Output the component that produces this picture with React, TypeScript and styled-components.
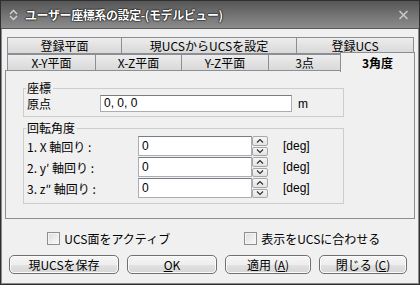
import styled, { createGlobalStyle } from 'styled-components';

const GlobalStyle = createGlobalStyle`
  html, body {
    margin: 0;
    padding: 0;
    background: #f0f0f0;
  }
  body {
    font-family: "Noto Sans CJK JP", "Noto Sans", sans-serif;
    font-size: 12px;
    color: #000;
  }
  * {
    box-sizing: border-box;
  }
`;

const Window = styled.div`
    width: 420px;
    height: 285px;
    border: 1px solid #2f2f2f;
    display: flex;
    flex-direction: column;
    background: #f0f0f0;
`;

const TitleBar = styled.div`
    height: 28px;
    flex: none;
    display: flex;
    align-items: center;
    padding: 0 10px 0 8px;
    background: linear-gradient(#565656, #727272 50%, #8c8c8c);
    border-bottom: 1px solid #5a5a5a;
`;

const TitleText = styled.span`
    margin-left: 7px;
    flex: 1;
    color: #fff;
    font-weight: bold;
    font-size: 12px;
    letter-spacing: -0.4px;
    text-shadow: 0 0 2px #000, 0 0 1px #000, 0 0 1px #000;
`;

const Body = styled.div`
    flex: 1;
    border-left: 1px solid #8a8a8a;
    border-right: 1px solid #8a8a8a;
    border-bottom: 1px solid #8a8a8a;
    padding: 8px 4px 0 5px;
`;

const TabRow = styled.div`
    display: flex;
    height: 17px;
    align-items: flex-start;
`;

const Tab = styled.div<{ $w: number; $active?: boolean }>`
    width: ${(p) => p.$w}px;
    height: ${(p) => (p.$active ? 20 : 17)}px;
    margin-top: ${(p) => (p.$active ? -2 : 0)}px;
    margin-right: -1px;
    border: 1px solid #8c8e94;
    border-bottom: ${(p) => (p.$active ? 'none' : '1px solid #8c8e94')};
    background: ${(p) => (p.$active ? '#f0f0f0' : 'linear-gradient(#ededed, #e2e2e2 50%, #d9d9d9)')};
    font-weight: ${(p) => (p.$active ? 'bold' : 'normal')};
    text-align: center;
    line-height: ${(p) => (p.$active ? 19 : 15)}px;
    position: ${(p) => (p.$active ? 'relative' : 'static')};
    z-index: ${(p) => (p.$active ? 2 : 0)};
    white-space: nowrap;
`;

const Panel = styled.div`
    margin-left: -2px;
    margin-top: -1px;
    width: 410px;
    height: 149px;
    border: 1px solid #8c8e94;
    padding: 10px 0 0 17px;
`;

const Group = styled.fieldset<{ $pt: number; $pb: number; $mt: number }>`
    margin: ${(p) => p.$mt}px 0 0 0;
    width: 321px;
    padding: ${(p) => p.$pt}px 0 ${(p) => p.$pb}px 2px;
    border: 1px solid #cdcdcd;
    min-inline-size: auto;
`;

const Legend = styled.legend`
    padding: 0 2px 0 1px;
    line-height: 14px;
    font-size: 12px;
`;

const Row = styled.div<{ $label: number }>`
    display: grid;
    grid-template-columns: ${(p) => p.$label}px auto auto auto;
    align-items: center;
    justify-content: start;
`;

const RowList = styled.div`
    display: flex;
    flex-direction: column;
    gap: 1px;
`;

const Label = styled.span`
    padding-left: 1px;
    white-space: nowrap;
`;

const Input = styled.div<{ $w: number; $h: number }>`
    width: ${(p) => p.$w}px;
    height: ${(p) => p.$h}px;
    background: #fff;
    border: 1px solid #abadb3;
    border-top-color: #7a7c84;
    padding-left: 3px;
    line-height: ${(p) => p.$h - 2}px;
    font-family: "Liberation Sans", "Noto Sans CJK JP", sans-serif;
`;

const Unit = styled.span<{ $ml: number }>`
    margin-left: ${(p) => p.$ml}px;
    font-family: "Liberation Sans", "Noto Sans CJK JP", sans-serif;
`;

const Spin = styled.div`
    width: 16px;
    height: 20px;
    display: flex;
    flex-direction: column;
    gap: 1px;
`;

const SpinBtn = styled.div`
    flex: 1;
    border: 1px solid #a7a7a7;
    border-radius: 2px;
    background: linear-gradient(#f6f6f6, #e3e3e3);
    display: flex;
    align-items: center;
    justify-content: center;
`;

const CheckRow = styled.div`
    margin-top: 11px;
    height: 16px;
    display: grid;
    grid-template-columns: 1fr 1fr;
    justify-items: center;
    align-items: center;
`;

const Check = styled.label`
    display: flex;
    align-items: center;
    gap: 4px;
    white-space: nowrap;
`;

const Box = styled.span`
    width: 13px;
    height: 13px;
    border: 1px solid #8f8f8f;
    background: linear-gradient(135deg, #dcdcdc, #fbfbfb);
    box-shadow: inset 0 0 0 1px #f4f4f4;
`;

const ButtonRow = styled.div`
    margin-top: 9px;
    display: flex;
    gap: 8px;
    padding-left: 2px;
`;

const Button = styled.div<{ $w: number }>`
    width: ${(p) => p.$w}px;
    height: 19px;
    border: 1px solid #707070;
    border-radius: 5px;
    background: linear-gradient(#f6f6f6, #eeeeee 50%, #e2e2e2 51%, #d6d6d6);
    box-shadow: inset 0 0 0 1px #fbfbfb;
    text-align: center;
    line-height: 17px;
    white-space: nowrap;
`;

const Chevron = ({ up }: { up?: boolean }) => (
    <svg width="8" height="5" viewBox="0 0 8 5">
        <path d={up ? 'M1 4.5 L4 1.5 L7 4.5' : 'M1 0.5 L4 3.5 L7 0.5'} stroke="#2a2a2a" strokeWidth="1.1" fill="none" />
    </svg>
);

const SpinBox = ({ value }: { value: string }) => (
    <>
        <Input $w={114} $h={20}>{value}</Input>
        <Spin>
            <SpinBtn><Chevron up /></SpinBtn>
            <SpinBtn><Chevron /></SpinBtn>
        </Spin>
        <Unit $ml={15}>[deg]</Unit>
    </>
);

const axes = ['1. X 軸回り :', '2. y′ 軸回り :', '3. z″ 軸回り :'];

function App() {
    return (
        <>
            <GlobalStyle />
            <Window>
                <TitleBar>
                    <svg width="9" height="12" viewBox="0 0 9 12">
                        <path d="M1 5 L4.5 1.5 L8 5 M1 7 L4.5 10.5 L8 7" stroke="#d8d8d8" strokeWidth="1.3" fill="none" />
                    </svg>
                    <TitleText>ユーザー座標系の設定-(モデルビュー)</TitleText>
                    <svg width="11" height="10" viewBox="0 0 11 10">
                        <path d="M1.5 1 L9.5 9 M9.5 1 L1.5 9" stroke="#c9c9c9" strokeWidth="1.6" />
                    </svg>
                </TitleBar>
                <Body>
                    <TabRow>
                        <Tab $w={115}>登録平面</Tab>
                        <Tab $w={176}>現UCSからUCSを設定</Tab>
                        <Tab $w={118}>登録UCS</Tab>
                    </TabRow>
                    <TabRow>
                        <Tab $w={89}>X-Y平面</Tab>
                        <Tab $w={87}>X-Z平面</Tab>
                        <Tab $w={88}>Y-Z平面</Tab>
                        <Tab $w={73}>3点</Tab>
                        <Tab $w={75} $active>3角度</Tab>
                    </TabRow>
                    <Panel>
                        <Group $mt={0} $pt={0} $pb={4}>
                            <Legend>座標</Legend>
                            <Row $label={74}>
                                <Label>原点</Label>
                                <Input $w={192} $h={17}>0, 0, 0</Input>
                                <Unit $ml={6}>m</Unit>
                            </Row>
                        </Group>
                        <Group $mt={4} $pt={1} $pb={5}>
                            <Legend>回転角度</Legend>
                            <RowList>
                                {axes.map((a) => (
                                    <Row $label={112} key={a}>
                                        <Label>{a}</Label>
                                        <SpinBox value="0" />
                                    </Row>
                                ))}
                            </RowList>
                        </Group>
                    </Panel>
                    <CheckRow>
                        <Check><Box />UCS面をアクティブ</Check>
                        <Check><Box />表示をUCSに合わせる</Check>
                    </CheckRow>
                    <ButtonRow>
                        <Button $w={110}>現UCSを保存</Button>
                        <Button $w={90}><u>O</u>K</Button>
                        <Button $w={86}>適用 (<u>A</u>)</Button>
                        <Button $w={88}>閉じる (<u>C</u>)</Button>
                    </ButtonRow>
                </Body>
            </Window>
        </>
    );
}

export default App;
